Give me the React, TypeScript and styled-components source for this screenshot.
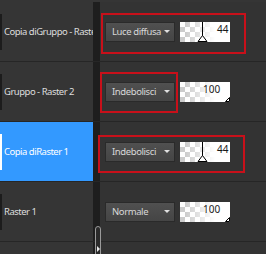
import React from 'react';
import styled, { createGlobalStyle } from 'styled-components';

const GlobalStyle = createGlobalStyle`
  html, body {
    margin: 0;
    padding: 0;
    background: #2f2f2f;
  }
`;

// Pannello livelli
const Panel = styled.div`
  width: 266px;
  height: 254px;
  padding-top: 2px;
  box-sizing: border-box;
  background: #353535;
  overflow: hidden;
  position: relative;
  font-family: 'Noto Sans', 'Liberation Sans', sans-serif;
`;

const Row = styled.div`
  display: grid;
  grid-template-columns: 93px 7px 1fr;
  height: 59px;
  border-bottom: 1px solid #262626;
`;

const LayerCell = styled.div<{ $selected?: boolean }>`
  display: flex;
  align-items: center;
  overflow: hidden;
  white-space: nowrap;
  background: ${p => (p.$selected ? '#3399ff' : '#353535')};
  color: ${p => (p.$selected ? '#ffffff' : '#dedede')};
  font-size: 9.5px;
  letter-spacing: -0.5px;
`;

const Thumb = styled.div<{ $selected?: boolean }>`
  flex: none;
  width: 2px;
  height: 36px;
  margin-right: 2px;
  background: ${p => (p.$selected ? '#ffffff' : '#1c1c1c')};
`;

const Divider = styled.div`
  background: #1e1e1e;
`;

const PropsCell = styled.div`
  position: relative;
  display: flex;
  align-items: center;
  gap: 5px;
  padding-left: 5px;
  background: #333333;
`;

const BlendButton = styled.div`
  box-sizing: border-box;
  width: 70px;
  height: 20px;
  display: flex;
  align-items: center;
  justify-content: space-between;
  padding: 0 4px 0 6px;
  background: linear-gradient(#505050, #454545);
  border: 1px solid #2a2a2a;
  color: #d8d8d8;
  font-size: 9.5px;
  letter-spacing: -0.4px;
  white-space: nowrap;
`;

const Caret = styled.span`
  flex: none;
  width: 0;
  height: 0;
  border-left: 3px solid transparent;
  border-right: 3px solid transparent;
  border-top: 3px solid #e0e0e0;
`;

const Swatch = styled.div`
  position: relative;
  width: 50px;
  height: 20px;
  background-image: linear-gradient(to right, rgba(255, 255, 255, 0) 10%, #ffffff 70%),
    conic-gradient(#cccccc 25%, #ffffff 0 50%, #cccccc 0 75%, #ffffff 0);
  background-size: 100% 100%, 10px 10px;
`;

const Value = styled.span<{ $left: number }>`
  position: absolute;
  top: 1px;
  left: ${p => p.$left}px;
  font-size: 10px;
  line-height: 12px;
  color: #1a1a1a;
`;

const Marker = styled.svg`
  position: absolute;
  top: 0;
  left: 0;
`;

const Annotation = styled.div<{ $top: number; $left: number; $w: number; $h: number }>`
  position: absolute;
  top: ${p => p.$top}px;
  left: ${p => p.$left}px;
  width: ${p => p.$w}px;
  height: ${p => p.$h}px;
  box-sizing: border-box;
  border: 2px solid #c8101a;
  pointer-events: none;
`;

const Scrollbar = styled.div`
  position: absolute;
  left: 95px;
  top: 226px;
  width: 6px;
  height: 40px;
  box-sizing: border-box;
  border: 1px solid #9a9a9a;
  border-radius: 3px 3px 0 0;
  background: #2a2a2a;

  &::after {
    content: '';
    position: absolute;
    left: 1px;
    top: 19px;
    border-top: 3px solid transparent;
    border-bottom: 3px solid transparent;
    border-left: 3px solid #e8e8e8;
  }
`;

interface Box {
  top: number;
  left: number;
  w: number;
  h: number;
}

interface LayerRow {
  name: string;
  blend: string;
  opacity: number;
  valueLeft: number;
  selected?: boolean;
  box?: Box;
}

const layers: LayerRow[] = [
  { name: 'Copia diGruppo - Raster 2', blend: 'Luce diffusa', opacity: 44, valueLeft: 37, box: { top: 11, left: 1, w: 145, h: 41 } },
  { name: 'Gruppo - Raster 2', blend: 'Indebolisci', opacity: 100, valueLeft: 23, box: { top: 10, left: 0, w: 78, h: 41 } },
  { name: 'Copia diRaster 1', blend: 'Indebolisci', opacity: 44, valueLeft: 37, selected: true, box: { top: 13, left: -2, w: 147, h: 38 } },
  { name: 'Raster 1', blend: 'Normale', opacity: 100, valueLeft: 23 },
];

const OpacityMarker: React.FC<{ value: number }> = ({ value }) => {
  if (value >= 100) {
    return (
      <Marker width="50" height="20" viewBox="0 0 50 20">
        <path d="M45.5 19.5 L49.5 15.5 L49.5 19.5 Z" fill="#ffffff" stroke="#000" strokeWidth="1" />
      </Marker>
    );
  }
  const x = Math.round((value / 100) * 50) + 0.5;
  return (
    <Marker width="50" height="20" viewBox="0 0 50 20">
      <line x1={x} y1="0" x2={x} y2="14" stroke="#000" strokeWidth="1" />
      <path d={`M${x} 13.5 L${x - 4.5} 19.5 L${x + 4.5} 19.5 Z`} fill="#ffffff" stroke="#000" strokeWidth="1" />
    </Marker>
  );
};

export default function App() {
  return (
    <>
      <GlobalStyle />
      <Panel>
        {layers.map(layer => (
          <Row key={layer.name}>
            <LayerCell $selected={layer.selected}>
              <Thumb $selected={layer.selected} />
              {layer.name}
            </LayerCell>
            <Divider />
            <PropsCell>
              <BlendButton>
                {layer.blend}
                <Caret />
              </BlendButton>
              <Swatch>
                <OpacityMarker value={layer.opacity} />
                <Value $left={layer.valueLeft}>{layer.opacity}</Value>
              </Swatch>
              {layer.box && (
                <Annotation $top={layer.box.top} $left={layer.box.left} $w={layer.box.w} $h={layer.box.h} />
              )}
            </PropsCell>
          </Row>
        ))}
        <Row>
          <LayerCell />
          <Divider />
          <PropsCell />
        </Row>
        <Scrollbar />
      </Panel>
    </>
  );
}
